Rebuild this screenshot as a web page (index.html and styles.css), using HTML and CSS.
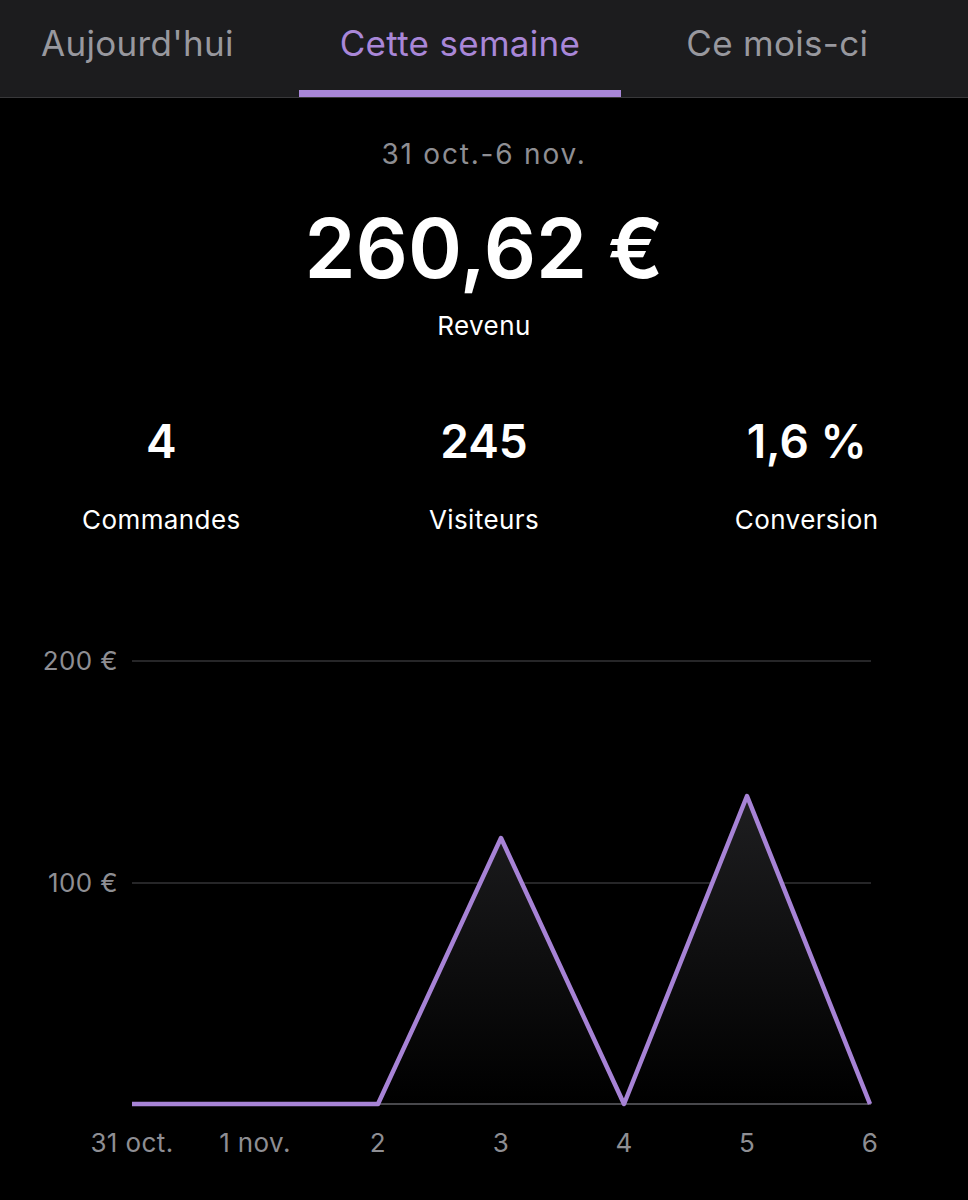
FILE: index.html
```html
<!DOCTYPE html>
<html>
<head>
	<meta charset="utf-8">
	<title>Statistiques</title>
	<link rel="stylesheet" href="styles.css">
</head>
<body>
	<div class="tabs">
		<div class="tab">Aujourd'hui</div>
		<div class="tab active">Cette semaine</div>
		<div class="tab">Ce mois-ci</div>
	</div>

	<div class="summary">
		<div class="range">31 oct.-6 nov.</div>
		<div class="amount">260,62 €</div>
		<div class="caption">Revenu</div>
	</div>

	<div class="stats">
		<div class="stat"><div class="num">4</div><div class="label">Commandes</div></div>
		<div class="stat"><div class="num">245</div><div class="label">Visiteurs</div></div>
		<div class="stat"><div class="num">1,6 %</div><div class="label">Conversion</div></div>
	</div>

	<svg class="chart" width="968" height="600" viewBox="0 0 968 600">
		<defs>
			<linearGradient id="area" x1="0" y1="0" x2="0" y2="1">
				<stop offset="0" stop-color="#1e1e20"/>
				<stop offset="1" stop-color="#000"/>
			</linearGradient>
		</defs>
		<!-- grid -->
		<line class="grid" x1="132" y1="61" x2="871" y2="61"/>
		<line class="grid" x1="132" y1="283" x2="871" y2="283"/>
		<text class="ylab" x="118" y="70">200 €</text>
		<text class="ylab" x="118" y="292">100 €</text>

		<path d="M132 504 L378 504 L501 238 L624 504 L747 196 L870 504 Z" fill="url(#area)"/>
		<line class="base" x1="132" y1="504" x2="871" y2="504"/>
		<polyline class="series" points="132,504 255,504 378,504 501,238 624,504 747,196 870,504"/>

		<text class="xlab" x="132" y="552">31 oct.</text>
		<text class="xlab" x="255" y="552">1 nov.</text>
		<text class="xlab" x="378" y="552">2</text>
		<text class="xlab" x="501" y="552">3</text>
		<text class="xlab" x="624" y="552">4</text>
		<text class="xlab" x="747" y="552">5</text>
		<text class="xlab" x="870" y="552">6</text>
	</svg>
</body>
</html>
```

FILE: styles.css
```css
*{
	box-sizing: border-box;
}

html, body{
	background-color: #000;
	color: #fff;
	font-family: Inter, "Noto Sans", sans-serif;
	margin: 0px;
	width: 100%;
}

.tabs{
	display: flex;
	gap: 24px;
	height: 98px;
	background-color: #1c1c1e;
	border-bottom: 1px solid #38383a;
}

.tab{
	display: flex;
	align-items: center;
	padding: 0 41px 5px 41px;
	font-size: 35px;
	letter-spacing: 0.3px;
	color: #98989e;
	border-bottom: 7px solid transparent;
}

.tab.active{
	color: #a987d8;
	border-bottom-color: #a987d8;
}

.summary{
	display: flex;
	flex-direction: column;
	align-items: center;
	padding-top: 40px;
}

.range{
	font-size: 28px;
	line-height: 32px;
	letter-spacing: 1.8px;
	color: #8e8e93;
}

.amount{
	margin-top: 29px;
	font-size: 82px;
	line-height: 100px;
	font-weight: 600;
}

.caption{
	margin-top: 12px;
	font-size: 26px;
	line-height: 30px;
	letter-spacing: 0.4px;
}

.stats{
	display: grid;
	grid-template-columns: repeat(3, 1fr);
	margin-top: 72px;
	text-align: center;
}

.num{
	font-size: 46px;
	line-height: 56px;
	font-weight: 600;
}

.label{
	margin-top: 34px;
	font-size: 26px;
	line-height: 34px;
	letter-spacing: 0.4px;
}

.chart{
	display: block;
	margin-top: 63px;
}

.grid{
	stroke: #333336;
	stroke-width: 1.5;
}

.base{
	stroke: #48484c;
	stroke-width: 2;
}

.series{
	fill: none;
	stroke: #a783d6;
	stroke-width: 4.5;
	stroke-linejoin: round;
}

.ylab, .xlab{
	font-family: Inter, "Noto Sans", sans-serif;
	font-size: 26px;
	letter-spacing: 0.4px;
	fill: #8e8e93;
}

.ylab{
	text-anchor: end;
}

.xlab{
	text-anchor: middle;
}
```
